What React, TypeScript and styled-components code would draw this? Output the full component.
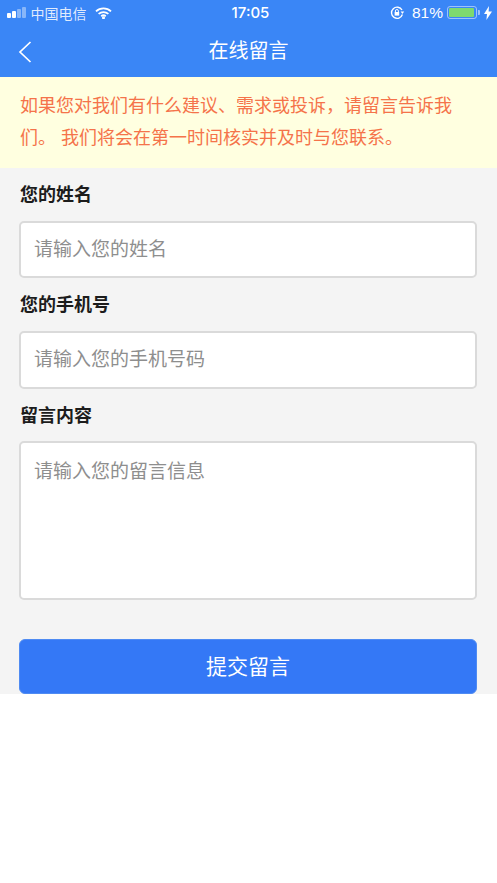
import React from 'react';

import styled, { createGlobalStyle } from 'styled-components';

const GlobalStyle = createGlobalStyle`
  html, body {
    margin: 0;
    padding: 0;
    background: #fff;
    font-family: "Liberation Sans", "Noto Sans CJK SC", sans-serif;
  }
  * {
    box-sizing: border-box;
  }
`;

const App: React.FC = () => (
  <>
    <GlobalStyle />
    <Page>
      <Header>
        <StatusBar>
          <StatusLeft>
            <Signal>
              <SignalBar $height={5} $on />
              <SignalBar $height={7} $on />
              <SignalBar $height={9} />
              <SignalBar $height={11} />
            </Signal>
            <Carrier>中国电信</Carrier>
            <svg width="17" height="12" viewBox="0 0 17 12" fill="none" stroke="#fff" strokeWidth="1.8">
              <path d="M1 4.3C5.2.4 11.8.4 16 4.3" />
              <path d="M3.6 6.9c2.8-2.5 7-2.5 9.8 0" />
              <path d="M6.2 9.2c1.4-1.1 3.2-1.1 4.6 0" />
              <circle cx="8.5" cy="10.8" r="0.6" fill="#fff" />
            </svg>
          </StatusLeft>
          <Clock>17:05</Clock>
          <StatusRight>
            <svg width="15" height="14" viewBox="0 0 15 14" fill="none" stroke="#fff" strokeWidth="1.4">
              <path d="M12.4 8.6A5.6 5.6 0 1 1 12 4" />
              <path d="M10.6 5.4h3.6L12.4 8z" fill="#fff" stroke="none" />
              <rect x="4.6" y="6" width="4.6" height="3.6" fill="#fff" stroke="none" />
              <path d="M5.4 6V5a1.5 1.5 0 0 1 3 0v1" strokeWidth="1" />
            </svg>
            <Percent>81%</Percent>
            <Battery>
              <BatteryFill style={{ width: '96%' }} />
            </Battery>
            <BatteryCap />
            <svg width="8" height="14" viewBox="0 0 8 14">
              <path d="M5 0 0 8h3L2.4 14 8 5.6H4.6z" fill="#fff" />
            </svg>
          </StatusRight>
        </StatusBar>
        <NavBar>
          <BackButton type="button" aria-label="返回">
            <svg width="14" height="22" viewBox="0 0 14 22" fill="none" stroke="#fff" strokeWidth="1.7">
              <path d="M12.5 1 2 11l10.5 10" />
            </svg>
          </BackButton>
          <Title>在线留言</Title>
        </NavBar>
      </Header>
      <Notice>如果您对我们有什么建议、需求或投诉，请留言告诉我们。 我们将会在第一时间核实并及时与您联系。</Notice>
      <Form>
        <Label>您的姓名</Label>
        <TextInput placeholder="请输入您的姓名" />
        <Label>您的手机号</Label>
        <TextInput placeholder="请输入您的手机号码" />
        <Label>留言内容</Label>
        <TextArea placeholder="请输入您的留言信息" />
        <SubmitButton type="button">提交留言</SubmitButton>
      </Form>
    </Page>
  </>
);

export default App;

const Page = styled.div`
  width: 497px;
  min-height: 883px;
  background: #fff;
`;

const Header = styled.header`
  height: 77px;
  background: #3a86f6;
  color: #fff;
`;

const StatusBar = styled.div`
  height: 25px;
  padding: 0 8px 0 7px;
  display: grid;
  grid-template-columns: 1fr auto 1fr;
  align-items: center;
`;

const StatusLeft = styled.div`
  display: flex;
  align-items: center;
  gap: 8px;
`;

const Signal = styled.div`
  display: flex;
  align-items: flex-end;
  gap: 1.5px;
  margin-right: -3px;
`;

const SignalBar = styled.span<{ $height: number; $on?: boolean }>`
  width: 3.5px;
  height: ${({ $height }) => $height}px;
  border-radius: 1px;
  background: ${({ $on }) => ($on ? '#fff' : 'rgba(255, 255, 255, 0.4)')};
`;

const Carrier = styled.span`
  font-size: 14px;
  color: rgba(255, 255, 255, 0.85);
`;

const Clock = styled.span`
  margin-left: 5px;
  font-family: Inter, "Liberation Sans", sans-serif;
  font-size: 15px;
  font-weight: 500;
`;

const StatusRight = styled.div`
  display: flex;
  align-items: center;
  justify-content: flex-end;
  margin-right: -3px;
`;

const Percent = styled.span`
  font-size: 15.5px;
  margin: 0 4px 0 7px;
`;

const Battery = styled.div`
  width: 30px;
  height: 13px;
  padding: 1px;
  border: 1px solid rgba(255, 255, 255, 0.5);
  border-radius: 3px;
`;

const BatteryFill = styled.div`
  height: 100%;
  background: #7ed96e;
  border-radius: 1px;
`;

const BatteryCap = styled.span`
  width: 2px;
  height: 5px;
  margin: 0 4px 0 1px;
  background: rgba(255, 255, 255, 0.5);
  border-radius: 0 1px 1px 0;
`;

const NavBar = styled.div`
  position: relative;
  height: 52px;
  padding-bottom: 3px;
  display: flex;
  align-items: center;
  justify-content: center;
`;

const BackButton = styled.button`
  position: absolute;
  left: 18px;
  top: 16px;
  padding: 0;
  border: none;
  background: none;
  display: flex;
`;

const Title = styled.h1`
  margin: 0;
  font-size: 20px;
  font-weight: 400;
  color: #fff;
`;

const Notice = styled.p`
  margin: 0;
  height: 91px;
  padding: 13px 20px 0;
  background: #ffffe0;
  color: #f5734a;
  font-size: 18px;
  line-height: 32px;
`;

const Form = styled.form`
  height: 526px;
  padding: 0 20px 0 19px;
  background: #f4f4f4;
  display: flex;
  flex-direction: column;
`;

const Label = styled.label`
  height: 53px;
  padding: 15px 0 0 1px;
  font-size: 18px;
  line-height: 25px;
  font-weight: 700;
  color: #1c1c1c;
`;

const TextInput = styled.input`
  display: block;
  width: 100%;
  height: 58px;
  padding: 0 13px;
  border: 2px solid #dadada;
  border-radius: 5px;
  background: #fff;
  outline: none;
  font: inherit;
  font-size: 19px;
  &::placeholder {
    color: #8e8e8e;
    opacity: 1;
  }
`;

const TextArea = styled.textarea`
  display: block;
  width: 100%;
  height: 160px;
  padding: 16px 13px;
  border: 2px solid #dadada;
  border-radius: 5px;
  background: #fff;
  outline: none;
  resize: none;
  font: inherit;
  font-size: 19px;
  line-height: 26px;
  &::placeholder {
    color: #8e8e8e;
    opacity: 1;
  }
`;

const SubmitButton = styled.button`
  margin-top: 39px;
  height: 55px;
  padding-bottom: 4px;
  border: 1px solid #4f8bf2;
  border-radius: 6px;
  background: #3478f6;
  color: #fff;
  font: inherit;
  font-size: 21px;
`;
